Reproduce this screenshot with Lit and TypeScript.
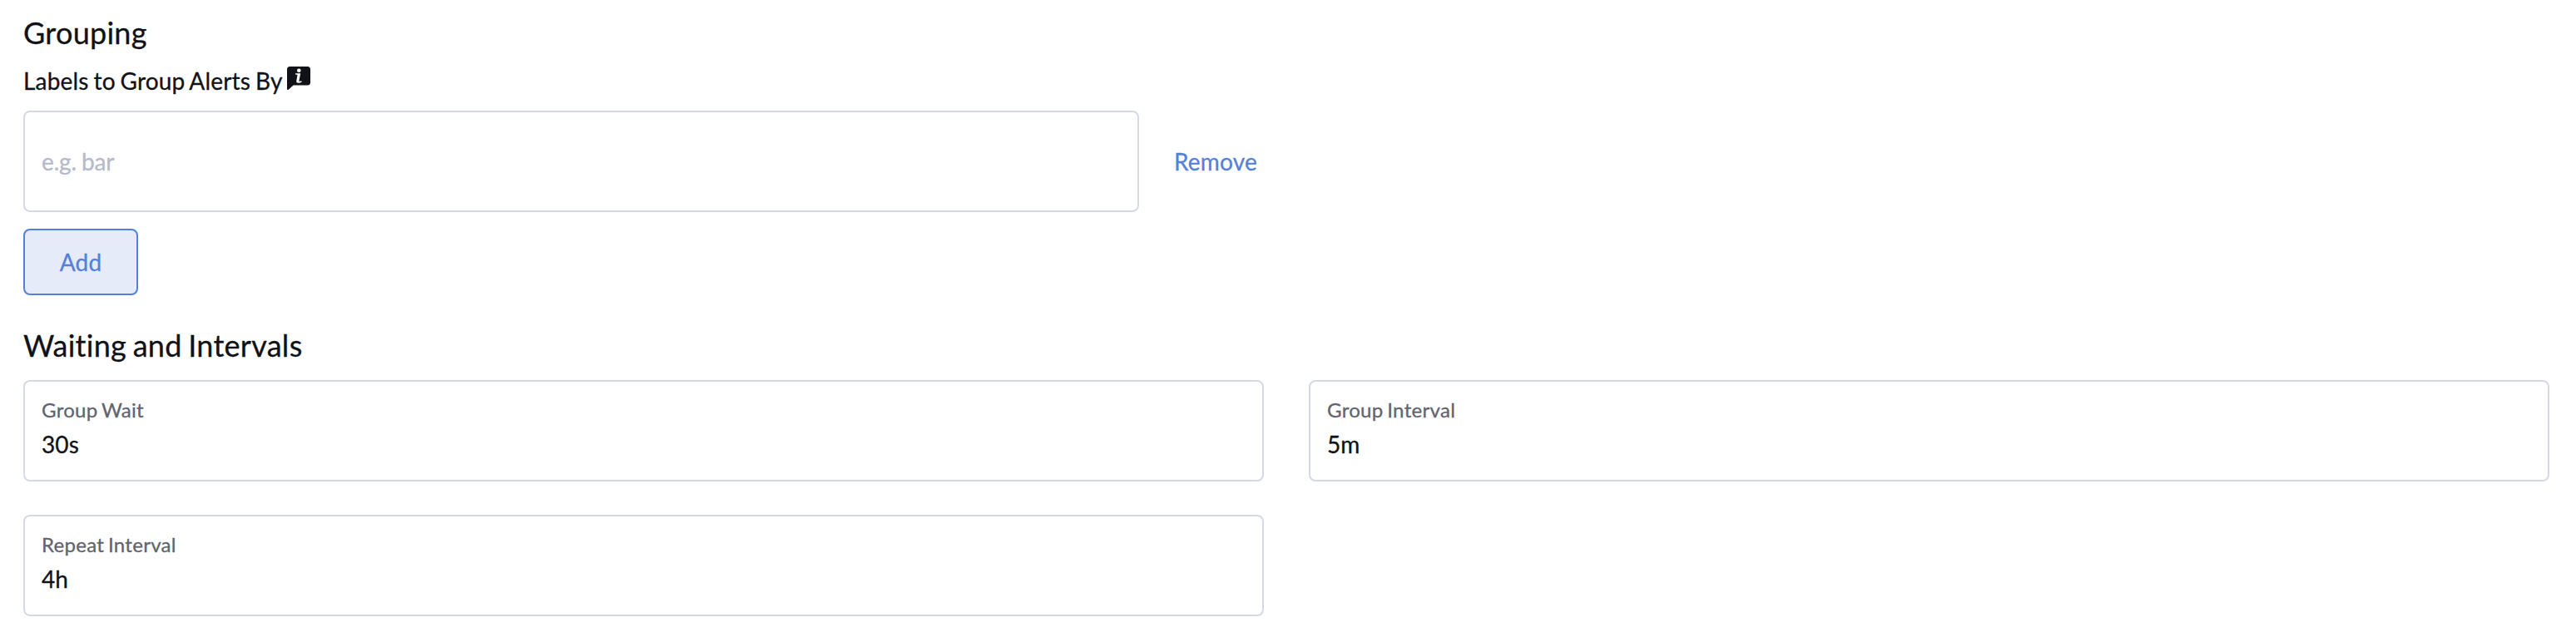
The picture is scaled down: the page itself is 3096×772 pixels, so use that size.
import { LitElement, html, css } from "lit";
import { customElement, property } from "lit/decorators.js";

@customElement("text-field")
class TextField extends LitElement {
  @property() label = "";
  @property() value = "";
  @property() placeholder = "";

  static styles = css`
    :host {
      display: block;
      min-width: 0;
    }
    .field {
      box-sizing: border-box;
      height: 122px;
      padding: 0 20px;
      border: 2px solid #d5d9e4;
      border-radius: 8px;
      background: #fff;
      display: flex;
      flex-direction: column;
      justify-content: center;
    }
    .label {
      font-size: 24px;
      line-height: 32px;
      letter-spacing: 0.3px;
      word-spacing: -1.7px;
      color: #62636d;
      margin-bottom: 5px;
    }
    .input {
      font: inherit;
      font-size: 28px;
      line-height: 40px;
      height: 40px;
      padding: 0;
      border: 0;
      outline: 0;
      background: none;
      color: #111217;
      width: 100%;
      letter-spacing: 0.1px;
    }
    .input.labelled {
      margin-bottom: 5px;
    }
    .input::placeholder {
      color: #b5b9cb;
      opacity: 1;
      letter-spacing: -0.15px;
      word-spacing: -1px;
    }
  `;

  render() {
    return html`<div class="field">
      ${this.label ? html`<label class="label" for="input">${this.label}</label>` : ""}
      <input
        id="input"
        class="input ${this.label ? "labelled" : ""}"
        .value=${this.value}
        placeholder=${this.placeholder}
      />
    </div>`;
  }
}

@customElement("app-root")
class AppRoot extends LitElement {
  static styles = css`
    :host {
      display: block;
      box-sizing: border-box;
      height: 772px;
      padding: 17px 32px 0 28px;
      background: #fff;
      color: #111217;
      font-family: Lato, sans-serif;
      font-weight: 400;
      font-size: 28px;
      letter-spacing: 0.2px;
      -webkit-text-stroke-width: 0.3px;
    }
    .title {
      margin: 0;
      font-size: 36px;
      font-weight: 400;
      line-height: 44px;
      letter-spacing: 0.28px;
      word-spacing: -1.9px;
    }
    .caption {
      display: flex;
      align-items: flex-start;
      gap: 5px;
      margin-top: 16px;
      height: 56px;
      line-height: 40px;
      word-spacing: -1.6px;
    }
    .info {
      display: block;
      margin-top: 3px;
      width: 28px;
      height: 28px;
    }
    .columns {
      display: grid;
      grid-template-columns: 1fr 1fr;
      column-gap: 54px;
      row-gap: 40px;
    }
    .entry {
      display: grid;
      grid-template-columns: 1fr 150px;
      align-items: center;
    }
    .button {
      box-sizing: border-box;
      font: inherit;
      line-height: 40px;
      letter-spacing: 0.2px;
      color: #5580da;
      cursor: pointer;
    }
    .remove {
      padding: 0 0 0 42px;
      border: 0;
      background: none;
      text-align: left;
    }
    .add {
      display: block;
      margin: 20px 0 38px;
      width: 138px;
      height: 80px;
      padding: 0;
      border: 2px solid #5580da;
      border-radius: 8px;
      background: #e6ebf9;
    }
    .waiting {
      margin-bottom: 20px;
    }
  `;

  render() {
    return html`
      <h2 class="title">Grouping</h2>
      <div class="caption">
        <span>Labels to Group Alerts By</span>
        <svg class="info" viewBox="0 0 28 28">
          <path
            fill="#111217"
            d="M3.500 0H24.500A3.500 3.500 0 0 1 28 3.500V19a3.500 3.500 0 0 1-3.500 3.500H7.600L2 27.600Q0 29 0 26.600V3.500A3.500 3.500 0 0 1 3.500 0Z"
          />
          <circle cx="14.300" cy="4.800" r="2.300" fill="#fff" />
          <path fill="#fff" d="M10 8.200H16.200L14.300 17.800L17.600 17.400V18.800Q15.500 19.800 13.200 19.700Q11 19.600 11.200 17.800L12.500 10L10 9.600Z" />
        </svg>
      </div>
      <div class="columns">
        <div class="entry">
          <text-field placeholder="e.g. bar"></text-field>
          <button class="button remove">Remove</button>
        </div>
      </div>
      <button class="button add">Add</button>
      <h2 class="title waiting">Waiting and Intervals</h2>
      <div class="columns">
        <text-field label="Group Wait" value="30s"></text-field>
        <text-field label="Group Interval" value="5m"></text-field>
        <text-field label="Repeat Interval" value="4h"></text-field>
      </div>
    `;
  }
}
